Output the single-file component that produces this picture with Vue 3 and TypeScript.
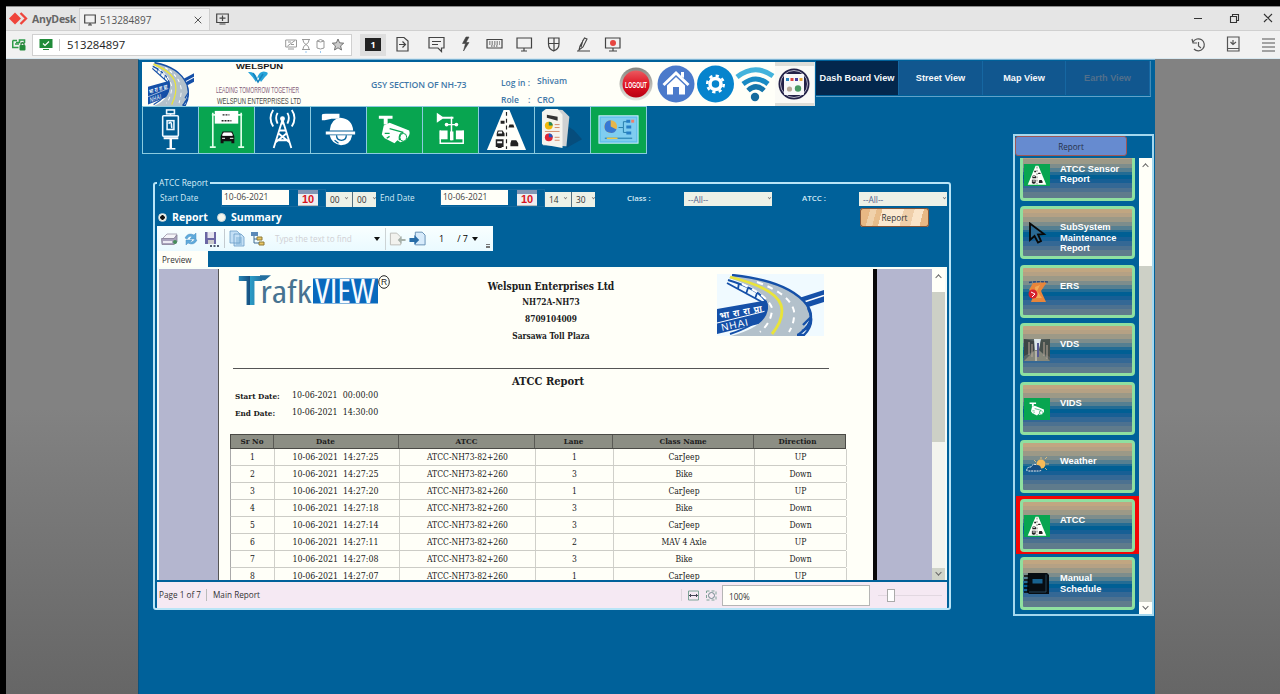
<script setup lang="ts">
interface ReportRow {
  time: string
  lane: number
  vehicle: string
  direction: string
}
interface SideItem {
  label: string
  icon: string
  active?: boolean
}

const rows: ReportRow[] = [
  { time: '14:27:25', lane: 1, vehicle: 'CarJeep', direction: 'UP' },
  { time: '14:27:25', lane: 3, vehicle: 'Bike', direction: 'Down' },
  { time: '14:27:20', lane: 1, vehicle: 'CarJeep', direction: 'UP' },
  { time: '14:27:18', lane: 3, vehicle: 'Bike', direction: 'Down' },
  { time: '14:27:14', lane: 3, vehicle: 'CarJeep', direction: 'Down' },
  { time: '14:27:11', lane: 2, vehicle: 'MAV 4 Axle', direction: 'UP' },
  { time: '14:27:08', lane: 3, vehicle: 'Bike', direction: 'Down' },
  { time: '14:27:07', lane: 1, vehicle: 'CarJeep', direction: 'UP' },
]
const columns: string[] = ['Sr No', 'Date', 'ATCC', 'Lane', 'Class Name', 'Direction']
const views: string[] = ['Dash Board View', 'Street View', 'Map View', 'Earth View']
const modules: { icon: string; green: boolean }[] = [
  { icon: 'ecb', green: false },
  { icon: 'gantry', green: true },
  { icon: 'tower', green: false },
  { icon: 'dome', green: false },
  { icon: 'camera', green: true },
  { icon: 'weather', green: true },
  { icon: 'road', green: false },
  { icon: 'sheet', green: false },
  { icon: 'board', green: true },
]
const sideItems: SideItem[] = [
  { label: 'ATCC Sensor\nReport', icon: 'road' },
  { label: 'SubSystem\nMaintenance\nReport', icon: 'cursor' },
  { label: 'ERS', icon: 'ers' },
  { label: 'VDS', icon: 'vds' },
  { label: 'VIDS', icon: 'camera' },
  { label: 'Weather', icon: 'cloud' },
  { label: 'ATCC', icon: 'road', active: true },
  { label: 'Manual\nSchedule', icon: 'book' },
]
</script>

<template>
  <div class="screen">
    <svg class="defs" width="0" height="0">
      <symbol id="nhai" viewBox="0 0 107 62" preserveAspectRatio="none">
        <path d="M82 24 L107 16 V28 L82 36Z" fill="#1550a8" />
        <path d="M84 29 L107 21.500" stroke="#fff" stroke-width="1.5" />
        <path d="M0 35 L52 26 L50 48 L0 60Z" fill="#1550a8" />
        <path d="M0 49 L49 37" stroke="#fff" stroke-width="1" />
        <path d="M12 4 Q52 17 51 34 Q50 52 14 62 H80 Q100 42 89 29 Q74 9 16 1Z" fill="#b3c1cb" />
        <path d="M15 1 Q72 7 90 31 Q101 47 81 61" fill="none" stroke="#1550a8" stroke-width="2.4" />
        <path d="M91 34 Q99 49 87 61 H80 M94 43 L86 51 M92 53 L85 57" fill="none" stroke="#1550a8" stroke-width="2.4" />
        <path d="M11 6 Q51 18 50 34 Q46 49 13 60" fill="none" stroke="#1550a8" stroke-width="2" />
        <path d="M10 9 L45 28 M22 9 L21 15 M31 14 L29 20 M40 19 L38 25" fill="none" stroke="#1550a8" stroke-width="1.8" />
        <path d="M13 3 Q58 14 64 31 Q68 44 55 60" fill="none" stroke="#e9e43a" stroke-width="2.8" />
        <path d="M25 10 Q51 22 55 34 Q55 48 43 58" fill="none" stroke="#fff" stroke-width="2" stroke-dasharray="6 5" />
        <path d="M40 8 Q73 20 77 37 Q78 48 72 58" fill="none" stroke="#fff" stroke-width="2" stroke-dasharray="6 5" />
        <text x="3" y="45" transform="rotate(-10 3 45)" font-family="Noto Sans, sans-serif" font-weight="700" font-size="9" fill="#fff" textLength="43">भा रा रा प्रा</text>
        <text x="5" y="57" transform="rotate(-12 5 57)" font-family="Liberation Sans, sans-serif" font-size="10" fill="#fff" textLength="27">NHAI</text>
      </symbol>
      <symbol id="ecb" viewBox="0 0 56 46">
        <g fill="none" stroke="#eef8ff" stroke-width="1.6">
          <rect x="24" y="3" width="8" height="4" /><path d="M28 7V9" />
          <rect x="20" y="9" width="16" height="21" rx="1" /><rect x="24.500" y="14" width="7" height="9" />
          <path d="M26 17 Q29 14 29 18 T30 21" />
        </g>
        <path d="M21 31H36V33H29.500V42H33V43.500H24V42H27V33H21Z" fill="#fff" />
      </symbol>
      <symbol id="gantry" viewBox="0 0 56 46">
        <path d="M14 6V41 M43 6V41 M11 41H17 M40 41H46 M13 8H44" stroke="#dfffe9" stroke-width="1.700" />
        <rect x="16" y="4" width="24" height="13" fill="#fff" />
        <path d="M24 8H31 M23 14H33" stroke="#222" stroke-width="1.4" stroke-dasharray="2 1" />
        <path d="M24 25H34L36 30V37H33V35H25V37H22V30Z" fill="#111" />
        <path d="M25 26.500H33L34 29H24Z M23.500 32H26.500 M31.500 32H35" fill="#fff" stroke="#fff" />
      </symbol>
      <symbol id="tower" viewBox="0 0 56 46">
        <g fill="none" stroke="#fff" stroke-width="1.900">
          <path d="M28 13L19 42 M28 13L37 42 M24 27L35 36 M32 27L21 36 M25 24H31 M22 34H34 M28 12V18" />
          <path d="M23 6Q20 11 23 17 M18.500 3Q13 11 18.500 20 M33 6Q36 11 33 17 M37.500 3Q43 11 37.500 20" />
        </g>
        <circle cx="28" cy="12" r="2.500" fill="#fff" />
      </symbol>
      <symbol id="dome" viewBox="0 0 56 46">
        <path d="M11 8.500Q11 7 15 7H29V12H21L14 13.500H11Z" fill="#fff" />
        <path d="M19 24Q20 12 30 11Q42 12 43 24Z M15 25H45V28H15Z" fill="#fff" />
        <path d="M19 29H42Q40 39 30.500 39Q21 38 19 29Z" fill="#fff" />
        <path d="M26 29Q26 34 31 34Q36 34 36 29M24 34L28 37" fill="none" stroke="#00619a" stroke-width="1.300" />
      </symbol>
      <symbol id="camera" viewBox="0 0 56 46">
        <path d="M12 9H26V12H21V18H17V12H12Z" fill="#fff" />
        <path d="M17 19L23 16L43 24Q45 29 39 34L34 36L31 34L28 37L18 32L15 28Z" fill="#fff" />
        <path d="M23 22L37 26Q32 27 33 34 M18 27H23M20 32L23 30" fill="none" stroke="#08a550" stroke-width="1.300" />
        <ellipse cx="37" cy="31" rx="3.500" ry="4" fill="#fff" stroke="#08a550" />
      </symbol>
      <symbol id="weather" viewBox="0 0 56 46">
        <path d="M14 6L20 10H31V12H20L14 16Z" fill="#fff" />
        <path d="M29 10V34 M23 18H35 M17.500 24V37H41V24" stroke="#fff" stroke-width="1.500" fill="none" />
        <circle cx="24" cy="18" r="1.900" fill="#fff" /><circle cx="34" cy="18" r="1.900" fill="#fff" />
        <rect x="17" y="24" width="8" height="9" fill="#fff" /><rect x="33.500" y="24" width="8" height="9" fill="#fff" />
        <rect x="27.500" y="25" width="3.500" height="9" fill="#fff" />
      </symbol>
      <symbol id="road" viewBox="0 0 56 46">
        <path d="M25 3H31L48 44H8Z" fill="#fffffa" />
        <path d="M28 5V43" stroke="#222" stroke-width="1.200" stroke-dasharray="4 3" />
        <g fill="#222">
          <path d="M19 24h5l2 3v3h-8v-3z M17 33h8v8h-2v1h-4v-1h-2z M22 14h4v3h-4z" />
          <path d="M31 18h4l1 3h-6z M33 34h5l2 3v3h-8v-3z" />
        </g>
        <path d="M18.500 35H23.500V37H18.500Z M20 25H23.500V27H19Z" fill="#fff" />
      </symbol>
      <symbol id="sheet" viewBox="0 0 56 46">
        <path d="M32 42L48 33L40 24L34 20Z" fill="#064d7c" />
        <path d="M8 6L15 2L28 3L35 10L32 40L8 39Z" fill="#cfd1d2" />
        <path d="M7 5L11 2H23L28 8V42L7 38Z" fill="#f5f4ee" />
        <path d="M12 8L23 10V14L12 11Z" fill="#333" />
        <circle cx="14" cy="19" r="4" fill="#f0b90d" /><path d="M14 19V15A4 4 0 0 1 18 19Z" fill="#25855f" />
        <circle cx="14" cy="31" r="4" fill="#df2436" /><path d="M14 31V27A4 4 0 0 1 18 31Z" fill="#2458bd" />
        <path d="M20 18H25 M20 21H25 M20 31H25 M20 34H25 M10 25H25" stroke="#d48b69" />
      </symbol>
      <symbol id="board" viewBox="0 0 56 46">
        <rect x="8" y="9" width="40" height="28" fill="#61bfeb" stroke="#d1f1ff" />
        <rect x="10" y="11" width="36" height="24" fill="#7fcdf0" />
        <circle cx="20" cy="20" r="6.500" fill="#e7b64a" /><path d="M20 20V13.500A6.500 6.500 0 1 0 26 23Z" fill="#3678d4" />
        <path d="M28 21H33V15H37 M33 21V26H37" fill="none" stroke="#277eac" />
        <path d="M36 13h4v3h-4z M36 19h5v3h-5z M36 25h5v3h-5z" fill="#267fc5" /><path d="M41 13h3v3h-3z" fill="#ee806b" />
        <path d="M14 32H42" stroke="#3790be" stroke-width="1.500" /><path d="M16 32H27" stroke="#ecc849" stroke-width="1.500" />
      </symbol>
      <symbol id="cursor" viewBox="0 0 26 22">
        <path d="M6 1.500V18L10.500 14L14 20.500L17 19L14 12.500L20 12Z" fill="#2b6a94" stroke="#080808" stroke-width="1.800" />
      </symbol>
      <symbol id="ers" viewBox="0 0 26 22">
        <path d="M9 2L23 1L17 10L22 21H7L10 13L5 9Z" fill="#e8853a" />
        <path d="M11 6L16 4L13 10L18 17H12Z" fill="#f3a856" />
        <path d="M5 1.500Q14 0 24 1" stroke="#29487d" stroke-width="1.500" stroke-dasharray="3 1" fill="none" />
        <circle cx="9" cy="13" r="4.500" fill="#d7202d" /><path d="M7 11L11 13L8 16" stroke="#fff" fill="none" />
      </symbol>
      <symbol id="vds" viewBox="0 0 26 22" preserveAspectRatio="none">
        <rect width="26" height="22" fill="#586363" />
        <path d="M10 0H17L15 12H11Z" fill="#dce7ea" /><path d="M0 0L10 2V12L0 17Z" fill="#3d4545" />
        <path d="M17 1L26 0V18L15 12Z" fill="#46504c" /><path d="M0 22L11 11H15L26 22Z" fill="#85877b" />
        <path d="M5 3V16M8 5V18M20 3V17M23 6V20" stroke="#baa89a" /><path d="M12 12V22" stroke="#e3dfd1" /><path d="M14 4V18" stroke="#555a93" stroke-width="2" />
      </symbol>
      <symbol id="cloud" viewBox="0 0 26 22">
        <circle cx="17" cy="8" r="4.500" fill="#f7bb58" /><path d="M17 1V3M10 4L12 6M21 3L23 1M22 8H25M21 12L23 14" stroke="#f5c777" stroke-width=".8" />
        <path d="M3 15Q3 11 7 11Q9 6 13 9Q17 9 17 13Q19 14 17 15Z" fill="#174f83" /><path d="M3 15Q2 11 7 11Q9 7 13 9 M17 14Q17 15 15 15H4" fill="none" stroke="#eee" stroke-width="1" stroke-dasharray="2 .7" />
      </symbol>
      <symbol id="book" viewBox="0 0 26 22">
        <path d="M4 0H23L25 2V21H5L3 19Z" fill="#070d12" /><path d="M22 1.500V19H5" stroke="#315c79" fill="none" stroke-width=".7" />
        <path d="M0 3H5M0 7H5M0 11H5M0 15H5M0 19H5" stroke="#030303" stroke-width="1.500" /><rect x="8.500" y="6" width="10" height="4.500" fill="#18628f" />
      </symbol>
    </svg>

    <header class="titlebar">
      <div class="brand">
        <svg width="20" height="16" viewBox="0 0 20 16"><path d="M0 7.500L6 1.500L12 7.500L6 13.500Z" fill="#ef443b" /><path d="M11.500 2L17 7.500L11.500 13" fill="none" stroke="#ef443b" stroke-width="2.300" /></svg>
        <b>AnyDesk</b>
      </div>
      <div class="session">
        <svg width="12" height="12" viewBox="0 0 12 12"><path d="M.7 1H11.300V9H.7Z M4 11H8M6 9V11" fill="none" stroke="#444" stroke-width="1.200" /></svg>
        <span>513284897</span>
        <svg class="close" width="8" height="8" viewBox="0 0 8 8"><path d="M.7 .7L7.300 7.300M7.300 .7L.7 7.300" stroke="#555" /></svg>
      </div>
      <svg class="newtab" width="13" height="12" viewBox="0 0 13 12"><path d="M.7 1H12.300V9.500H.7Z M3.500 11H9.500 M6.500 2.500V8M3.500 5.200H9.500" fill="none" stroke="#444" stroke-width="1.200" /></svg>
      <svg class="wincontrols" width="79" height="12" viewBox="0 0 79 12"><path d="M0 5.500H8 M36.500 3.500H42.500V9.500H36.500Z M38.500 3V1.500H44.500V7.500H43 M70 1L78 9M78 1L70 9" fill="none" stroke="#333" stroke-width="1.100" /></svg>
    </header>

    <div class="addressbar">
      <svg class="lock" width="14" height="14" viewBox="0 0 14 14"><path d="M.7 2.500H5 M.7 2.500V9.500H6.500 M4 4.500H7.500V2H12.500V5" fill="none" stroke="#2e9b49" stroke-width="1.600" /><path d="M3 6H7" stroke="#2e9b49" stroke-width="1.500" /><rect x="7.500" y="7" width="6" height="5.500" rx="1" fill="#248b3b" /><path d="M9 7V5.500Q10.500 4 12 5.500V7" stroke="#277e39" stroke-width="1.200" fill="none" /></svg>
      <div class="address">
        <svg width="14" height="13" viewBox="0 0 14 13"><path d="M.5 1H13.500V10H.5Z M4 12H10V11H4Z" fill="#208b39" /><path d="M4 5.500L6 7.500L10 3.500" fill="none" stroke="#fff" stroke-width="1.200" /></svg>
        <span>513284897</span>
        <svg class="hints" width="60" height="16" viewBox="0 0 60 16">
          <g fill="none" stroke="#999"><path d="M.7 3H11.500V10H.7Z M3 12H9M2.500 9L10 3.500M3 5H6M6 7.500H9" /><path d="M17 2.500H25M17 12.500H25M18 3Q18 6 21 7.500Q24 6 24 3M18 12Q18 9 21 7.500Q24 9 24 12" /><path d="M32 4Q35.500 1 39 4V11Q35.500 13 32 11Z M32 4Q35.500 6 39 4" /></g>
          <path d="M53 2L54.600 5.800L58.700 6.200L55.600 8.900L56.500 13L53 10.800L49.500 13L50.400 8.900L47.300 6.200L51.400 5.800Z" fill="#ccc" stroke="#666" stroke-width=".9" /><path d="M21 14V16M35.500 14V16" stroke="#9bc7ef" />
        </svg>
      </div>
      <div class="monitor"><span>1</span></div>
      <svg class="tools" width="229" height="20" viewBox="0 0 229 20">
        <g fill="none" stroke="#444" stroke-width="1.200">
          <path d="M1 2.500H8L12 6V16H1Z M3 9.500H9M6.500 6.500L9.500 9.500L6.500 12.500" />
          <path d="M33 2.500H48V13H45.500V16.500L42 13H33Z M36 6.500H45M36 9.500H42" />
          <path d="M70 2L66.500 8.500H69.500L67.500 16L73 7.500H70L73 2Z" fill="#444" stroke-width=".6" />
          <path d="M91 4.500H106V13H91Z" /><path d="M93 7H104M93 9H104M95 11H102" stroke-dasharray="1.500 1" />
          <path d="M121 3H135.500V13H121Z M125 16H131M128 13V16" />
          <path d="M152.500 3H163V9Q163 14 157.700 16Q152.500 14 152.500 9Z M158 3V16M152.500 8.500H163" />
          <path d="M184 11L188.500 3L191 4L187 12L183 15Z M181 16H194M187 5L185 12" stroke-width="1.100" />
          <path d="M209.500 3H224V13H209.500Z M213 16H221M217 13V16" />
        </g><circle cx="217" cy="8" r="3" fill="#e64540" />
      </svg>
      <svg class="righttools" width="86" height="20" viewBox="0 0 86 20"><g fill="none" stroke="#555" stroke-width="1.200"><path d="M2 7A6 6 0 1 1 3 14M1 4L2 8H6M7.500 7V11L10 13" /><path d="M36.500 2H48V16H36.500ZM37 13.500H48M42 5V9M39.500 7L42 9.500L45 7" /><path d="M71 4H84M71 8H84M71 12H84M71 16H84" /></g></svg>
    </div>

    <main class="remote">
      <div class="app">
        <div class="topline">
          <div class="masthead">
            <svg class="nhai-small" width="46" height="44"><use href="#nhai" width="46" height="44" /></svg>
            <svg class="welspun" width="88" height="44" viewBox="0 0 88 44">
              <text x="21" y="7" font-family="Liberation Sans, sans-serif" font-weight="700" font-size="7" fill="#171717" textLength="47" lengthAdjust="spacingAndGlyphs">WELSPUN</text>
              <path d="M33 10Q40 9 42 16Q45 8 51 10Q55 11 50 15L46 20L43 15L41 20Q37 14 33 10Z" fill="#27a4d9" /><path d="M38 11L43 20L48 12" fill="none" stroke="#1782bd" stroke-width="1.500" />
              <text x="1" y="31" font-family="Liberation Sans, sans-serif" font-size="8.800" fill="#84617a" textLength="83" lengthAdjust="spacingAndGlyphs">LEADING TOMORROW TOGETHER</text>
              <text x="2" y="42" font-family="Liberation Sans, sans-serif" font-size="8.800" fill="#4a4a46" textLength="84" lengthAdjust="spacingAndGlyphs">WELSPUN ENTERPRISES LTD</text>
            </svg>
            <div class="section">GSY SECTION OF NH-73</div>
            <dl class="login"><dt>Log in :</dt><dd>Shivam</dd><dt class="role"><span>Role</span><span>:</span></dt><dd class="role">CRO</dd></dl>
            <svg class="actions" width="195" height="44" viewBox="0 0 195 44">
              <defs><linearGradient id="red" x2="0" y2="1"><stop stop-color="#ea5a60" /><stop offset=".55" stop-color="#df1020" /><stop offset="1" stop-color="#b80013" /></linearGradient><linearGradient id="silver" x2="0" y2="1"><stop stop-color="#85857f" /><stop offset="1" stop-color="#e9e9e3" /></linearGradient></defs>
              <circle cx="17" cy="22" r="16.500" fill="url(#silver)" /><circle cx="17" cy="22" r="13.500" fill="url(#red)" />
              <text x="6" y="25.500" font-family="Liberation Sans, sans-serif" font-weight="700" font-size="9" fill="#fff" textLength="22" lengthAdjust="spacingAndGlyphs">LOGOUT</text>
              <circle cx="57" cy="22" r="18.500" fill="#4b7acb" />
              <path d="M43.500 22L57 9L70.500 22L68.500 24L57 13L45.500 24Z M48 23.500L57 15L66 23.500V32.500H60V25H54V32.500H48Z M62 10H65V16L62 14Z" fill="#fff" />
              <circle cx="96.500" cy="22" r="18.500" fill="#0684cd" />
              <circle cx="96.500" cy="22" r="5.500" fill="none" stroke="#fff" stroke-width="3.500" /><circle cx="96.500" cy="22" r="8.300" fill="none" stroke="#fff" stroke-width="2.500" stroke-dasharray="3.250 3.250" />
              <g fill="none" stroke-width="5"><path d="M118 15Q136 1 154 14" stroke="#43b3dc" /><path d="M124 22Q137 12 149 22" stroke="#188ac4" /><path d="M129 28.500Q137 21 145 28.500" stroke="#1575ab" /></g><circle cx="136" cy="35" r="4.200" fill="#156a9e" />
              <rect x="156" y="0" width="39" height="44" fill="#deded8" /><rect x="156" y="4" width="39" height="37" fill="#fafaf6" /><circle cx="175" cy="22" r="15.500" fill="#242248" /><circle cx="175" cy="22" r="13.500" fill="none" stroke="#d4d4e0" stroke-width=".8" /><rect x="165" y="12" width="20" height="21" rx="1" fill="#f9f9f9" />
              <path d="M167 16h3v3h-3z" fill="#2c87c1" /><path d="M171.500 16h3v3h-3z" fill="#de4540" /><path d="M176 16h3v3h-3z" fill="#493fa0" /><path d="M180.500 16h3v3h-3z" fill="#e6a838" /><circle cx="170.500" cy="27" r="2.600" fill="#b8a998" /><circle cx="179" cy="26.500" r="3.200" fill="#4a9a65" />
            </svg>
          </div>
          <nav class="views"><span v-for="(view, i) in views" :key="view" :class="{ current: i === 0, disabled: i === 3 }">{{ view }}</span></nav>
        </div>

        <div class="workspace">
          <div class="left">
            <div class="modules"><span v-for="m in modules" :key="m.icon" :class="{ green: m.green }"><svg width="55" height="45"><use :href="'#' + m.icon" width="55" height="45" /></svg></span></div>

            <section class="report">
              <h2>ATCC Report</h2>
              <div class="filters">
                <label class="fl">Start Date</label>
                <div class="datebox"><span class="date">10-06-2021</span><span class="calendar">10</span></div>
                <span class="time">00<i></i></span><span class="time second">00<i></i></span>
                <label class="fl end">End Date</label>
                <div class="datebox"><span class="date">10-06-2021</span><span class="calendar">10</span></div>
                <span class="time">14<i></i></span><span class="time second">30<i></i></span>
                <label class="fl bold class">Class :</label><span class="select">--All--<i></i></span>
                <label class="fl bold atcc">ATCC :</label><span class="select">--All--<i></i></span>
              </div>
              <div class="modes"><span class="radio on"></span><b class="m1">Report</b><span class="radio"></span><b class="m2">Summary</b><button>Report</button></div>
              <div class="viewerbar">
                <svg width="110" height="22" viewBox="0 0 110 22">
                  <path d="M5 11L10 6H20L17 11Z" fill="#f4f4f8" stroke="#aba8b8" /><path d="M4.500 10.500H17L20 7V14L17 16.500H5Z" fill="#a9a3bd" stroke="#858097" stroke-width=".8" /><path d="M6 14H15" stroke="#eeecf4" stroke-width="2" /><circle cx="18" cy="14" r="2" fill="#468e5b" />
                  <path d="M28 10Q31 4 37 7L39 5V11H33L35 9Q32 7 30 11Z M40 12Q37 18 31 15L29 17V12H35L33 14Q36 15 38 11Z" fill="#5eaadc" stroke="#4c91c2" stroke-width=".5" />
                  <path d="M48 4H59V16H48Z" fill="#6a66a4" /><path d="M50.500 4H57V10H50.500Z" fill="#e5e4ef" /><path d="M51 12H57V16H51Z" fill="#ccc" /><path d="M53 18h2M56.500 18h2M60 18h2" stroke="#1b2942" stroke-width="1.300" />
                  <path d="M67.500 1V20" stroke="#c4cbd0" />
                  <path d="M73 3H80L83 6V15H73Z M77 6H84L87 9V18H77Z" fill="#c3dff5" stroke="#6a9cc6" stroke-width=".8" /><path d="M79 10H85M79 12H85M79 14H85M79 16H85" stroke="#6fa6ce" stroke-width=".8" />
                  <path d="M94 4H101V8H94Z" fill="#5989b9" /><path d="M100 9H105V12H100ZM102 14H107V17H102Z" fill="#e8c665" stroke="#8e7a37" /><path d="M97 8V15H102M97 11H100" stroke="#416c93" fill="none" />
                </svg>
                <span class="search">Type the text to find</span><span class="drop"></span>
                <svg class="pages" width="44" height="22" viewBox="0 0 44 22"><path d="M4.500 5H11L15 9V17H4.500Z" fill="#f2f2ee" stroke="#bdbdb8" /><path d="M20 11H16L16 8L12 12L16 16V13H20Z" fill="#a7b1aa" /><path d="M30 4H37L40 7V17H30Z" fill="#d7ebfb" stroke="#6690b5" /><path d="M24 10H29V7L34 12L29 17V14H24Z" fill="#286da8" /></svg>
                <span class="pageno">1</span><span class="total">/ 7</span><span class="drop last"></span><span class="grip"></span>
              </div>
              <div class="preview-tab">Preview</div>
              <div class="preview">
                <div class="canvas">
                  <article class="paper">
                    <div class="paper-head">
                      <svg class="trafik" width="156" height="38" viewBox="0 0 156 38">
                        <defs><linearGradient id="teal"><stop stop-color="#2a8cba" /><stop offset=".48" stop-color="#164f80" /><stop offset=".5" stop-color="#2b9cc6" /><stop offset="1" stop-color="#236f9f" /></linearGradient></defs>
                        <text x="0" y="32.500" font-family="Open Sans, sans-serif" font-weight="700" font-size="41" fill="url(#teal)" textLength="25" lengthAdjust="spacingAndGlyphs">T</text>
                        <path d="M22 3.300H33L27 8.300H22Z" fill="#236f9f" />
                        <text x="22.500" y="30.500" font-family="Open Sans, sans-serif" font-size="30" fill="#477391" textLength="51" lengthAdjust="spacingAndGlyphs">rafk</text>
                        <rect x="75" y="6.500" width="65" height="25" fill="#0869bd" /><text x="77" y="30.500" font-family="Open Sans, sans-serif" font-size="32" fill="#f7fbff" textLength="60" lengthAdjust="spacingAndGlyphs">VIEW</text>
                        <ellipse cx="146" cy="10" rx="5.300" ry="6.300" fill="none" stroke="#222" /><text x="143" y="13" font-family="Liberation Sans, sans-serif" font-size="8.500" fill="#222">R</text>
                      </svg>
                      <div class="company"><strong>Welspun Enterprises Ltd</strong><b>NH72A-NH73</b><b>8709104009</b><b>Sarsawa Toll Plaza</b></div>
                      <svg class="nhai-big" width="107" height="62"><use href="#nhai" width="107" height="62" /></svg>
                    </div>
                    <h1>ATCC Report</h1>
                    <dl class="range"><dt>Start Date:</dt><dd>10-06-2021&nbsp; 00:00:00</dd><dt>End Date:</dt><dd>10-06-2021&nbsp; 14:30:00</dd></dl>
                    <div class="table">
                      <div class="tr head"><span v-for="c in columns" :key="c">{{ c }}</span></div>
                      <div v-for="(r, i) in rows" :key="i" class="tr"><span>{{ i + 1 }}</span><span>10-06-2021&nbsp; {{ r.time }}</span><span>ATCC-NH73-82+260</span><span>{{ r.lane }}</span><span>{{ r.vehicle }}</span><span>{{ r.direction }}</span></div>
                    </div>
                  </article>
                </div>
                <div class="vscroll"><i class="up"></i><i class="thumb"></i><i class="down"></i></div>
              </div>
              <footer class="status"><span class="pg">Page 1 of 7</span><span class="main">Main Report</span>
                <svg width="36" height="24" viewBox="0 0 36 24"><path d="M0 6V18" stroke="#c7c1c8" /><g fill="none" stroke="#7fa397"><path d="M7.500 8H17.500V17H7.500Z" /><path d="M25.500 8H35V17H25.500Z" stroke-dasharray="3 2" /><path d="M8 12.500H17M10 11L8.500 12.500L10 14M15 11L16.500 12.500L15 14" stroke="#445" /></g><circle cx="30.500" cy="12.500" r="3" fill="none" stroke="#70878c" /></svg>
                <span class="zoom">100%</span><span class="slider"><i></i></span>
              </footer>
            </section>
          </div>

          <aside class="side">
            <button class="side-title">Report</button>
            <div class="side-body">
              <div class="cards">
                <div v-for="item in sideItems" :key="item.label" class="slot" :class="{ active: item.active }">
                  <div class="card"><span class="ico" :class="item.icon"><svg width="26" height="22"><use :href="'#' + item.icon" width="26" height="22" /></svg></span><span class="txt">{{ item.label }}</span></div>
                </div>
              </div>
              <div class="sscroll"><i class="up"></i><i class="thumb"></i><i class="down"></i></div>
            </div>
          </aside>
        </div>
      </div>
    </main>
  </div>
</template>

<style>
html, body { margin: 0; background: #000; overflow: hidden; }
</style>

<style scoped>
* { box-sizing: border-box; }
.screen { width: 1280px; height: 694px; padding: 6px 0 0 6px; background: #000; font: 9.5px/12px "Open Sans", "Noto Sans", sans-serif; white-space: nowrap; overflow: hidden; }
.defs { display: block; width: 0; height: 0; }
svg { display: block; flex: none; }
.titlebar { display: flex; height: 25px; background: #e5e5e5; border-top: 1px solid #8c8c8c; border-bottom: 1px solid #d0d0d0; align-items: stretch; }
.brand { width: 73px; display: flex; align-items: center; padding-left: 3px; gap: 3px; color: #666; }
.brand b { font-size: 10.5px; letter-spacing: -.25px; }
.session { width: 131px; height: 22px; margin-top: 1px; background: #f1f1f1; border: 1px solid #cfcfcf; border-bottom: 0; display: flex; align-items: center; padding-left: 4px; color: #555; }
.session span { font-size: 10px; margin-left: 4px; }
.close { margin-left: 43px; }
.newtab { align-self: center; margin-left: 6px; }
.wincontrols { align-self: center; margin-left: auto; margin-right: 7px; }
.addressbar { height: 28px; background: #f1f1f1; display: flex; align-items: center; border-bottom: 1px solid #d8e8f0; }
.lock { margin-left: 6px; }
.address { margin-left: 6px; width: 320px; height: 22px; border: 1px solid #d0d0d0; background: #fff; display: flex; align-items: center; padding: 0 6px; }
.address span { margin-left: 6px; border-left: 1px solid #c7c7c7; padding-left: 7px; font-size: 11.3px; color: #222; }
.hints { margin-left: auto; }
.monitor { margin-left: 8px; width: 26px; height: 22px; background: #dedede; display: flex; justify-content: center; align-items: center; }
.monitor span { width: 16px; height: 13px; background: #222; color: #fff; text-align: center; font: bold 9px/13px "Open Sans", sans-serif; }
.tools { margin-left: 10px; }
.righttools { margin-left: auto; margin-right: 3px; }
.remote { height: 635px; background: linear-gradient(#828282 0, #828282 55%, #666 100%); display: flex; padding-left: 132px; }
.app { width: 1017px; height: 635px; background: #00619a; border-top: 1px solid #7fb4d4; border-left: 1px solid #0b527d; }
.topline { display: flex; height: 46px; margin-left: 3px; padding-top: 2px; }
.masthead { width: 673px; height: 44px; display: flex; background: #fffff8; color: #3f78a8; border-right: 1px solid #dbe9ed; }
.nhai-small { margin-left: 6px; }
.welspun { margin-left: 21px; }
.section { width: 100px; margin-left: 68px; margin-top: 17px; font-size: 8.7px; line-height: 12px; font-weight: 600; letter-spacing: -.07px; }
.login { display: grid; grid-template-columns: 36px 40px; grid-template-rows: 18px 15px; margin: 14px 0 0 30px; font-size: 8.5px; font-weight: 600; line-height: 14px; }
.login dd { margin: -2px 0 0; }
.login dt { display: flex; gap: 9px; }
.login .role { margin-top: -1px; }
.actions { margin-left: auto; }
.views { display: grid; grid-template-columns: 83px 84px 83px 84px; width: 335px; height: 36px; margin: -1px 0 0 1px; border-bottom: 1px solid #62a1c8; border-right: 1px solid #438bb6; }
.views span { height: 34px; line-height: 35px; background: #11578f; border-right: 1px solid #1667a2; text-align: center; color: #f4f8fb; font-family: "Liberation Sans", sans-serif; font-weight: 700; font-size: 9.2px; }
.views .current { background: #03274d; }
.views .disabled { color: #526f8b; }
.workspace { display: flex; }
.left { width: 812px; margin-left: 3px; }
.modules { display: flex; width: 505px; height: 48px; border: 1px solid #8bcbdf; }
.modules span { width: 56px; border-right: 1px solid #8bcbdf; background: #005d94; }
.modules span.green { background: #08a550; }
.report { width: 798px; height: 428px; margin: 28px 0 0 11px; border: 2px solid #b9e5f7; border-radius: 3px; padding: 0 2px; }
.report h2 { margin: -7px 0 0 0; width: 53px; height: 12px; padding-left: 2px; font-size: 8.4px; line-height: 12px; font-weight: 400; color: #d9eff9; background: #00619a; }
.filters { display: flex; height: 19px; align-items: flex-start; margin-left: 3px; }
.fl { width: 61px; padding-top: 2px; color: #d3eaf5; font-size: 8.2px; line-height: 14px; }
.datebox { width: 105px; height: 18px; display: flex; border: 1px solid #176ba0; }
.date { width: 67px; height: 15px; background: #fffff8; color: #444; font-size: 8.5px; line-height: 13px; padding-left: 2px; }
.calendar { margin-left: 9px; width: 20px; height: 16px; background: #eeeef0; border-top: 4px solid #8296b4; border-bottom: 1px solid #bbb; color: #d9131d; font: bold 11px/11px "Liberation Sans", sans-serif; text-align: center; }
.time, .select { background: #edf1e7; margin-top: 3px; height: 15px; line-height: 15px; color: #333; font-size: 8.4px; display: flex; padding: 0 4px; justify-content: space-between; }
.time { width: 26px; }
.time.second { width: 24px; border-left: 1px solid #557080; padding-right: 0; }
.time i, .select i { width: 3px; height: 3px; border-right: 1px solid #777; border-bottom: 1px solid #777; transform: rotate(45deg) scale(.8); margin-top: 4px; }
.fl.end { margin-left: 4px; width: 60px; }
.fl.bold { font-weight: 600; font-size: 7.9px; }
.fl.class { width: 57px; margin-left: 32px; }
.select { width: 88px; height: 14px; color: #50618c; padding-right: 1px; }
.fl.atcc { width: 57px; margin-left: 30px; }
.modes { height: 18px; display: flex; align-items: center; color: #fff; font-size: 10.6px; padding-left: 1px; }
.radio { width: 9px; height: 9px; border-radius: 50%; background: #f4f7ed; border: 1px solid #ccd7da; flex: none; }
.radio.on { background: radial-gradient(#111 0 2px, #f4f7ed 2.500px); }
.modes .m1 { margin-left: 5px; width: 45px; }
.modes .m2 { margin-left: 5px; }
.modes button { margin-left: auto; margin-right: 18px; width: 69px; height: 19px; padding: 0; border: 1px dotted #9d5030; outline: 1px solid #815539; outline-offset: -1px; border-radius: 3px; background: linear-gradient(105deg, #e8b884 0 13%, #f0d1aa 13% 22%, #e8bd8b 22% 30%, #fbe9d1 30% 60%, #efcfaa 60% 75%, #fae4c8 75% 88%, #e8b884 88%); font: 8.2px/18px "Open Sans", sans-serif; color: #333; }
.viewerbar { width: 336px; height: 25px; background: linear-gradient(#f9ffff, #eafaff); display: flex; align-items: center; }
.search { width: 98px; margin-left: 8px; color: #d0d0d4; font-size: 8.2px; }
.drop { width: 0; height: 0; border: 3px solid transparent; border-top: 4px solid #111; margin-top: 3px; margin-left: 1px; }
.pages { margin-left: 5px; border-left: 1px solid #ccd3d5; }
.pageno { margin-left: 10px; font-size: 9px; }
.total { margin-left: 13px; font-size: 9px; }
.drop.last { margin-left: 4px; }
.grip { margin-left: 8px; align-self: flex-end; width: 4px; height: 4px; border-top: 1px solid #777; border-bottom: 2px solid #777; margin-bottom: 3px; }
.preview-tab { width: 51px; height: 16px; background: #fffff8; color: #333; padding-left: 5px; font-size: 8.1px; line-height: 17px; }
.preview { width: 790px; height: 313px; display: flex; border-top: 2px solid #f9fff8; border-left: 2px solid #f4faf7; border-right: 2px solid #f4faf7; }
.canvas { width: 773px; height: 311px; background: #b4b6cf; overflow: hidden; padding-left: 59px; }
.paper { width: 659px; height: 330px; background: #fffff8; border-left: 1px solid #555; border-right: 4px solid #080808; padding: 3px 0 0 11px; font-family: "DejaVu Serif Condensed", "DejaVu Serif", serif; font-stretch: condensed; color: #202020; }
.paper-head { display: flex; width: 610px; height: 96px; }
.trafik { margin-left: 8px; }
.company { width: 150px; margin-left: 82px; display: flex; flex-direction: column; align-items: center; font-size: 8.3px; line-height: 17px; padding-top: 7px; }
.company strong { font-size: 10.2px; line-height: 15px; }
.nhai-big { margin-left: 91px; margin-top: 2px; background: #f0faff; }
.paper h1 { margin: 0 0 0 3px; width: 596px; border-top: 1px solid #555; padding: 6px 0 0 34px; text-align: center; font-size: 11.1px; line-height: 14px; }
.range { display: grid; grid-template-columns: 57px 120px; grid-auto-rows: 17px; margin: 0 0 0 5px; font-size: 8.1px; line-height: 13px; padding-top: 1px; }
.range dt { font-weight: 700; }
.range dd { margin: 0; font-size: 8.8px; margin-top: -1px; }
.table { width: 616px; margin-top: 10px; }
.tr { display: grid; grid-template-columns: 44px 125px 136px 78px 141px 92px; height: 17px; border-bottom: 1px solid #ccccc6; border-left: 1px solid #aaa; font-size: 8.5px; line-height: 16px; text-align: center; }
.tr span { border-right: 1px solid #d0d0ca; }
.tr span:nth-child(2) { padding-right: 3px; font-size: 8.8px; }
.tr.head { height: 15px; background: #8c8e84; border: 1px solid #4a4a46; font-weight: 700; font-size: 8px; line-height: 13px; grid-template-columns: 43px 125px 136px 78px 141px 91px; }
.tr.head span { border-color: #5a5a55; }
.tr.head span:nth-child(2) { padding-right: 21px; font-size: 8px; }
.tr.head span:last-child { border: 0; padding-right: 4px; }
.vscroll { width: 13px; height: 311px; background: #f3f4ee; display: flex; flex-direction: column; }
.up, .down { position: relative; display: block; height: 23px; background: #fffff8; }
.up::after, .down::after { content: ""; position: absolute; left: 4px; top: 6px; width: 4px; height: 4px; border-left: 1px solid #666; border-top: 1px solid #666; transform: rotate(45deg) scale(.9); }
.down { height: 12px; background: #d0d4c9; margin-top: auto; }
.down::after { top: 2px; transform: rotate(225deg) scale(.9); }
.vscroll .thumb { height: 150px; background: #cdd0c6; }
.status { height: 26px; width: 790px; margin-top: 2px; background: #f5e9f3; display: flex; align-items: center; color: #333; font-size: 8.2px; }
.pg { width: 50px; padding-left: 2px; border-right: 1px solid #bbb; line-height: 12px; }
.main { margin-left: 6px; width: 468px; }
.zoom { width: 148px; height: 21px; background: #fffff8; border: 1px solid #b5b5b5; margin-left: 5px; padding-left: 6px; line-height: 21px; }
.slider { width: 64px; height: 1px; background: #e2d8e1; margin-left: 8px; display: flex; align-items: center; }
.slider i { width: 8px; height: 13px; background: #fff; border: 1px solid #aaa; margin-left: 9px; flex: none; }
.side { width: 141px; height: 482px; margin: 28px 0 0 59px; border: 2px solid #a5d8ee; }
.side-title { display: block; width: 112px; height: 20px; padding: 0; background: #668bd0; border: 1px solid #a05656; border-radius: 3px; font: 8.1px/19px "Open Sans", sans-serif; color: #263248; }
.side-body { display: flex; height: 456px; margin-top: 2px; }
.cards { width: 124px; height: 456px; overflow: hidden; display: flex; flex-direction: column; padding-left: 1px; }
.slot { flex: none; height: 58.500px; padding: 3px 4px 2px; }
.slot:first-child { margin-top: -13.500px; }
.slot.active { background: #f20505; }
.card { height: 53px; border: 3px solid #8fe0a0; border-radius: 4px; display: flex; background: linear-gradient(#c1a681 0 8%, #b5a184 8% 18%, #9c9987 18% 28%, #7d8d8c 28% 36%, #557f91 36% 44%, #236c94 44% 50%, #005f94 50% 60%, #175f95 60% 68%, #346895 68% 78%, #4c7190 78% 88%, #5f7b8c 88%); }
.ico { width: 26px; height: 22px; margin: 13px 0 0 1px; }
.ico.road, .ico.camera { background: #08a550; }
.txt { margin: 13px 0 0 10px; color: #fff; font: bold 9.3px/10.600px "Liberation Sans", sans-serif; white-space: pre; }
.sscroll { width: 13px; display: flex; flex-direction: column; background: #cdd0c6; }
.sscroll .up { height: 12px; }
.sscroll .thumb { height: 96px; background: #fffff8; }
.sscroll .down { background: #fffff8; }
</style>
